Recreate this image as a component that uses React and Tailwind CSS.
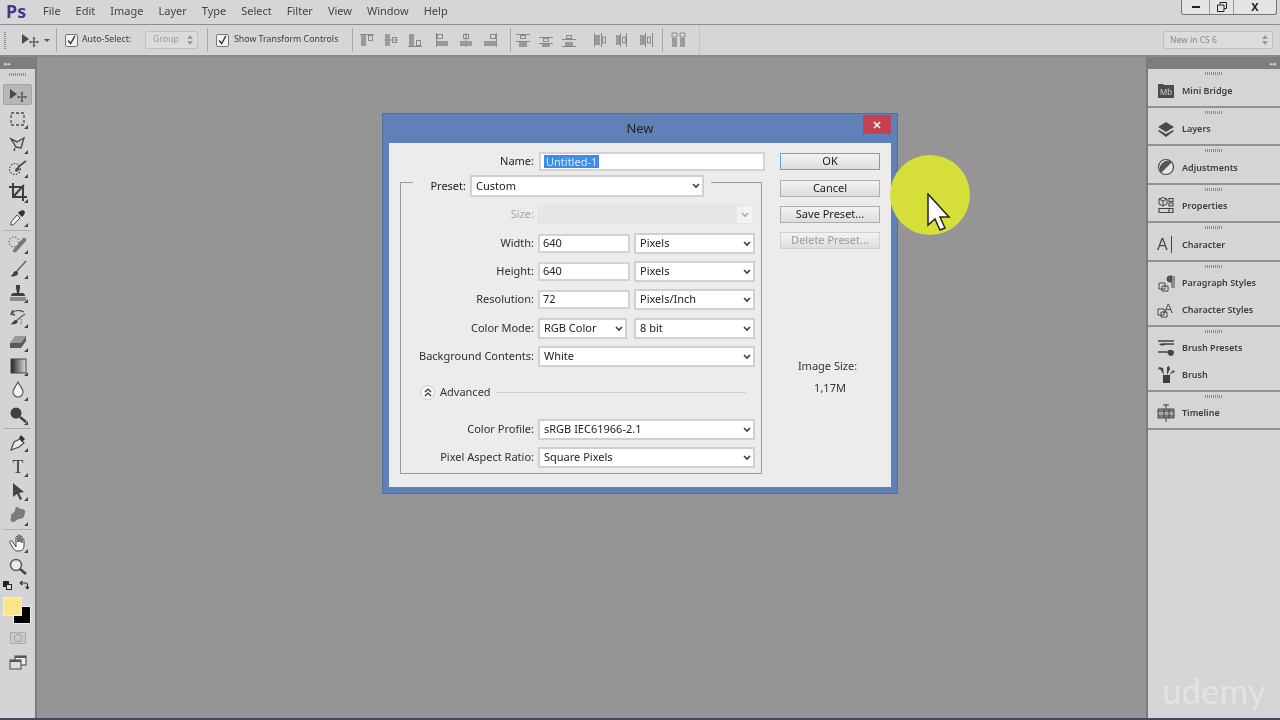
import React from "react";

const menus = ["File", "Edit", "Image", "Layer", "Type", "Select", "Filter", "View", "Window", "Help"];

const Grip = ({ className = "" }) => (
  <div className={`h-[3px] bg-[repeating-linear-gradient(90deg,#8c8c8c_0_1px,transparent_1px_2px)] ${className}`} />
);

const Chevron = ({ color = "#3c3c3c" }) => (
  <svg width="8" height="6" viewBox="0 0 8 6" className="shrink-0">
    <path d="M1 1l3 3 3-3" fill="none" stroke={color} strokeWidth="1.6" />
  </svg>
);

const UpDown = ({ color = "#999" }) => (
  <svg width="6" height="10" viewBox="0 0 6 10" className="shrink-0">
    <path d="M3 0l3 4H0zM3 10L0 6h6z" fill={color} />
  </svg>
);

const Check = () => (
  <div className="flex h-[13px] w-[13px] items-center justify-center rounded-[2px] border border-[#777] bg-[#f2f2f2]">
    <svg width="13" height="13" viewBox="0 0 13 13">
      <path d="M2.5 6.5l3 3.5 5-9" fill="none" stroke="#333" strokeWidth="1.6" />
    </svg>
  </div>
);

const Sep = ({ className = "" }) => <div className={`h-[24px] w-px bg-[#a8a8a8] ${className}`} />;

// options bar align icons
const AlignIcon = ({ d, r }) => (
  <svg width="16" height="16" viewBox="0 0 16 16">
    <path d={d} stroke="#8a8a8a" strokeWidth="1" fill="none" />
    <rect x={r[0]} y={r[1]} width={r[2]} height={r[3]} fill="#9a9a9a" />
    <rect x={r[4]} y={r[5]} width={r[6]} height={r[7]} fill="none" stroke="#8a8a8a" />
  </svg>
);

const alignGroups = [
  { d: "M1 2.5h14", r: [2, 3, 5, 11, 9.5, 3.5, 4, 5] },
  { d: "M1 8h14", r: [2, 2, 5, 12, 9.5, 5.5, 4, 5] },
  { d: "M1 14.5h14", r: [2, 2, 5, 12, 9.5, 8.5, 4, 5] },
  { d: "M2.5 1v14", r: [3, 9, 11, 5, 3.5, 2.5, 5, 4] },
  { d: "M8 1v14", r: [2, 9, 12, 5, 5.5, 2.5, 5, 4] },
  { d: "M14.5 1v14", r: [2, 9, 12, 5, 8.5, 2.5, 5, 4] },
];
const distributeGroups = [
  { d: "M1 2.5h14M1 9.5h14", r: [4, 10, 8, 5, 5.5, 3.5, 5, 3] },
  { d: "M1 5.5h14M1 11.5h14", r: [4, 12, 8, 3, 5.5, 6.5, 5, 3] },
  { d: "M1 7.5h14M1 14.5h14", r: [4, 10, 8, 4, 5.5, 3.5, 5, 3] },
  { d: "M2.5 1v14M9.5 1v14", r: [3, 3, 5, 10, 10.5, 5, 3, 6] },
  { d: "M5.5 1v14M11.5 1v14", r: [1, 3, 4, 10, 7.5, 5, 3, 6] },
  { d: "M7.5 1v14M14.5 1v14", r: [2, 3, 5, 10, 9.5, 5, 3, 6] },
];

const MoveIcon = ({ w = 18 }) => (
  <svg width={w} height="16" viewBox="0 0 18 16">
    <path d="M1 2v10l7-5z" fill="#4a4a4a" />
    <path d="M13 6v8M9 10h8" stroke="#4a4a4a" strokeWidth="1.2" />
    <path d="M13 4.500l1.500 2h-3zM13 15.500l-1.500-2h3zM8 10l2-1.500v3zM18 10l-2 1.500v-3z" fill="#4a4a4a" />
  </svg>
);

const G = "#4b4b4b";
const toolIcons = {
  marquee: <rect x="3" y="4" width="13" height="12" fill="none" stroke={G} strokeWidth="1.3" strokeDasharray="3 2" />,
  lasso: <path d="M3 5l6 3 7-4-3 10-5-1-3-5zM7 14l-1 3" fill="none" stroke={G} strokeWidth="1.4" />,
  quick: (
    <>
      <circle cx="7" cy="11" r="5.500" fill="none" stroke={G} strokeWidth="1.2" strokeDasharray="1.500 1.500" />
      <path d="M18 3l-8 6" stroke={G} strokeWidth="1.600" />
      <path d="M7 13c0-3 2-4 4-4 1 1 1 3-1 4-1 1-2 1-3 0z" fill={G} />
    </>
  ),
  crop: <path d="M5 1v14h14M1 5h14v14M16 3L5 15" fill="none" stroke="#3e3e3e" strokeWidth="2" />,
  dropper: (
    <>
      <path d="M9 8l3 3-7 7H3v-3z" fill="#f1f1f1" stroke={G} />
      <path d="M10 6l4 4 2-2 1-3-2-2-3 1z" fill="#333" />
    </>
  ),
  heal: (
    <>
      <circle cx="6" cy="8" r="5" fill="none" stroke={G} strokeDasharray="1.500 1.500" />
      <path d="M5 16L15 4c2-1 4 1 3 3L8 18c-2 1-4-1-3-2z" fill="#787878" />
    </>
  ),
  brush: (
    <>
      <path d="M18 2L9 12" stroke="#666" strokeWidth="1.600" />
      <path d="M2 17c3 0 3-5 6-5 2 0 2 2 2 3-1 2-5 3-8 2z" fill="#3f3f3f" />
    </>
  ),
  stamp: (
    <>
      <path d="M8 2h4v3l-1 5h3c2 0 3 1 3 3H3c0-2 1-3 3-3h3L8 5z" fill="#3f3f3f" />
      <rect x="2" y="14" width="16" height="4" fill="#8a8a8a" />
    </>
  ),
  history: (
    <>
      <path d="M4 6c3-3 8-3 12-1M5 3L3 7l4 1" fill="none" stroke={G} strokeWidth="1.300" />
      <path d="M17 7L9 13" stroke="#666" strokeWidth="1.500" />
      <path d="M2 17c3 0 3-4 6-4 2 0 2 2 1 3-1 1-4 2-7 1z" fill="#3f3f3f" />
      <path d="M13 12a5 5 0 01-1 6" fill="none" stroke={G} strokeDasharray="1.500 1.500" />
    </>
  ),
  eraser: (
    <>
      <path d="M7 4h11l-5 7H2z" fill="#9a9a9a" />
      <path d="M2 11h11v5H2zM13 11l5-7v5l-5 7z" fill="#5a5a5a" />
    </>
  ),
  gradient: (
    <>
      <defs>
        <linearGradient id="gradTool" x1="0" x2="1" y1="0" y2="0">
          <stop offset="0" stopColor="#222" />
          <stop offset="1" stopColor="#ddd" />
        </linearGradient>
      </defs>
      <rect x="3" y="3" width="15" height="14" fill="url(#gradTool)" stroke="#444" />
    </>
  ),
  drop: <path d="M10 2c2 4 5 7 5 10a5 5 0 01-10 0c0-3 3-6 5-10z" fill="#f4f4f4" stroke="#5a5a5a" strokeWidth="1.200" />,
  burn: (
    <>
      <circle cx="8" cy="8" r="5.500" fill="#3f3f3f" />
      <path d="M12 12l6 5" stroke="#3f3f3f" strokeWidth="2.400" />
    </>
  ),
  pen: (
    <>
      <path d="M12 7l4 4-5 4-8 3 3-8z" fill="#eee" stroke={G} strokeWidth="1.200" />
      <path d="M11 6l2-3 4 4-3 3z" fill="#333" />
    </>
  ),
  type: (
    <text x="10" y="16" textAnchor="middle" fontSize="18" fill="#3c3c3c" fontFamily="Liberation Serif, serif">
      T
    </text>
  ),
  path: <path d="M5 2l11 9-5 1 3 6-2 1-3-6-4 3z" fill="#444" />,
  shape: <path d="M9 2c2 0 2 2 4 2 3 0 5 1 4 4-1 2 0 3-2 5-2 1-4 0-6 2-2 2-5 3-6 1-1-2 0-3 0-5 0-3 4-3 4-6 0-2 1-3 2-3z" fill="#7c7c7c" />,
  hand: (
    <path d="M4 8l4 6V4.500c0-1.500 2-1.500 2 0V9 3c0-1.500 2-1.500 2 0v6-5c0-1.500 2-1.500 2 0v6-3c0-1.500 2-1.500 2 0v6c0 3-2 5-5 5H9c-2 0-3-2-4-3L2 10c-1-2 1-3 2-2z" fill="#fafafa" stroke="#4a4a4a" />
  ),
  zoom: (
    <>
      <circle cx="8" cy="8" r="5.500" fill="#e8e8e8" stroke="#555" strokeWidth="1.400" />
      <path d="M12 12l6 5" stroke="#444" strokeWidth="2.400" />
    </>
  ),
};

const toolGroups = [
  ["marquee", "lasso", "quick", "crop", "dropper"],
  ["heal", "brush", "stamp", "history", "eraser", "gradient", "drop", "burn"],
  ["pen", "type", "path", "shape"],
  ["hand", "zoom"],
];

const Tool = ({ name }) => (
  <div className="relative flex h-[24.4px] items-center justify-center">
    <svg width="20" height="20" viewBox="0 0 20 20">
      {toolIcons[name]}
    </svg>
    {name !== "zoom" && (
      <svg className="absolute right-[7px] bottom-[2px]" width="4" height="4" viewBox="0 0 4 4">
        <path d="M4 0v4H0z" fill="#444" />
      </svg>
    )}
  </div>
);

const LeftToolbar = () => (
  <aside className="flex w-[35px] shrink-0 flex-col bg-[#d4d4d4]">
    <div className="flex h-[12px] items-center bg-[#7e7e7e] pl-[4px] text-[7px] leading-none text-[#cfcfcf]">▸▸</div>
    <Grip className="mx-auto mt-[4px] w-[18px]" />
    <div className="mx-[3px] mt-[8px] mb-[2px] flex h-[21px] items-center justify-center rounded-[2px] border border-[#a3a3a3] bg-[#b6b6b6]">
      <MoveIcon w={20} />
    </div>
    {toolGroups.map((g, i) => (
      <div key={i}>
        {i > 0 && <div className="mx-[4px] my-[1px] border-t border-[#b0b0b0]" />}
        {g.map((name) => (
          <Tool key={name} name={name} />
        ))}
      </div>
    ))}
    <div className="flex h-[12px] items-center gap-[7px] pl-[3px]">
      <div className="relative h-[9px] w-[9px]">
        <div className="absolute top-0 left-0 h-[6px] w-[6px] bg-[#222]" />
        <div className="absolute right-0 bottom-0 h-[6px] w-[6px] border border-[#222] bg-[#ddd]" />
      </div>
      <svg width="10" height="10" viewBox="0 0 10 10">
        <path d="M1 3h5.500a2 2 0 012 2v4M1 3l2.500-2M1 3l2.500 2M8.500 9L6.500 6.500M8.500 9l2-2.500" fill="none" stroke="#333" strokeWidth="1.200" />
      </svg>
    </div>
    <div className="relative mt-[6px] h-[28px]">
      <div className="absolute top-[9px] left-[13px] h-[18px] w-[18px] border border-[#eee] bg-black" />
      <div className="absolute top-0 left-[3px] h-[19px] w-[19px] border border-[#eee] bg-[#fbe58c]" />
    </div>
    <div className="mx-auto mt-[7px] flex h-[12px] w-[16px] items-center justify-center border border-[#aaa] bg-[#cbcbcb]">
      <div className="h-[8px] w-[8px] rounded-full border border-dotted border-[#777]" />
    </div>
    <div className="mt-[10px] flex justify-center">
      <svg width="20" height="18" viewBox="0 0 20 18">
        <rect x="7" y="2" width="11" height="9" fill="#eee" stroke="#444" />
        <path d="M7 2h11v2H7z" fill="#555" />
        <rect x="2" y="6" width="11" height="9" fill="#ddd" stroke="#444" />
        <path d="M2 6h11v2H2z" fill="#555" />
      </svg>
    </div>
  </aside>
);

const PanelIcon = {
  mb: (
    <>
      <path d="M1 3h5l1 1h10v13H1z" fill="#4c4c4c" />
      <text x="9" y="14" textAnchor="middle" fontSize="8.500" fill="#ccc" fontFamily="Liberation Sans, sans-serif">
        Mb
      </text>
    </>
  ),
  layers: <path d="M9 2l8 5-8 5-8-5zM2 10l7 4 7-4 1 1-8 6-8-6z" fill="#4a4a4a" />,
  adj: (
    <>
      <circle cx="9" cy="9" r="7.500" fill="#e6e6e6" stroke="#4c4c4c" strokeWidth="1.200" />
      <path d="M15 4A8 8 0 004 15z" fill="#555" />
    </>
  ),
  props: (
    <>
      <path d="M2 2l4-1.500 4 1.500v5l-4 2-4-2zM2 2l4 2 4-2M6 4v5" fill="none" stroke="#444" />
      <path d="M12 1.500h4v3h-4zM12 6h4v3h-4zM2 11.500h14v4H2zM12 12v3" fill="none" stroke="#444" strokeWidth="1.100" />
    </>
  ),
  char: (
    <>
      <text x="0" y="15" fontSize="16" fill="#4a4a4a" fontFamily="Liberation Sans, sans-serif">
        A
      </text>
      <path d="M14.500 1v17" stroke="#444" />
    </>
  ),
  para: (
    <>
      <path d="M2 9h6v6H2zM5 12h6v5H5z" fill="#ddd" stroke="#444" />
      <path d="M15 2h-2a3 3 0 000 6h2M15 2v12M17 2v12" fill="#555" stroke="#444" />
    </>
  ),
  cstyle: (
    <>
      <path d="M1 9h6v6H1zM4 12h6v5H4z" fill="#ddd" stroke="#444" />
      <text x="7" y="13" fontSize="13" fill="#4a4a4a" fontFamily="Liberation Sans, sans-serif">
        A
      </text>
    </>
  ),
  presets: (
    <>
      <path d="M1 2h16M7 5h10M1 13h9" stroke="#444" strokeWidth="1.300" />
      <path d="M2 5c3-1 5-1 7 0-2 2-5 2-7 0z" fill="#444" />
      <path d="M10 13c1-3 6-3 7 0 0 3-2 4-3 4s-3-1-4-4z" fill="#444" />
    </>
  ),
  brush: (
    <>
      <path d="M6 10h7v8H6z" fill="#3d3d3d" />
      <path d="M7 10L3 4l-2 1 1-3 4 1zM10 10V2l2-1 1 3zM12 10l4-5 2 2-3 1z" fill="#444" />
    </>
  ),
  timeline: (
    <>
      <path d="M9 0v18M6 1h6" stroke="#444" />
      <path d="M1 5h16v9H1z" fill="#aaa" stroke="#444" />
      <path d="M1 7h16M1 12h16M7 5v9M12 5v9" stroke="#444" />
    </>
  ),
};

const panelSections = [
  [["mb", "Mini Bridge"]],
  [["layers", "Layers"]],
  [["adj", "Adjustments"]],
  [["props", "Properties"]],
  [["char", "Character"]],
  [["para", "Paragraph Styles"], ["cstyle", "Character Styles"]],
  [["presets", "Brush Presets"], ["brush", "Brush"]],
  [["timeline", "Timeline"]],
];

const RightPanel = () => (
  <aside className="flex w-[132px] shrink-0 flex-col bg-[#d5d5d5]">
    <div className="flex h-[12px] items-center justify-end bg-[#7e7e7e] pr-[4px] text-[7px] leading-none text-[#cfcfcf]">◂◂</div>
    {panelSections.map((section, i) => (
      <section key={i} className="border-b-2 border-[#929292] pt-[3px] pb-[2px]">
        <Grip className="mx-auto mb-[2px] w-[18px]" />
        {section.map(([icon, label]) => (
          <div key={label} className="flex h-[26.500px] items-center gap-[7px] pl-[9px]">
            <svg width="18" height="18" viewBox="0 0 18 18" className="overflow-visible">
              {PanelIcon[icon]}
            </svg>
            <span className="text-[9px] font-semibold whitespace-nowrap text-[#3c3c3c]">{label}</span>
          </div>
        ))}
      </section>
    ))}
  </aside>
);

const Input = ({ className = "", children }) => (
  <div className={`flex h-[19px] items-center border-2 border-[#d3d3d3] bg-white pl-[3px] text-[11px] text-[#222] ${className}`}>
    {children}
  </div>
);

const Select = ({ className = "", children }) => (
  <div className={`flex h-[21px] items-center justify-between border-2 border-[#d0d0d0] bg-white pr-[2px] pl-[4px] text-[11px] text-[#222] ${className}`}>
    <span>{children}</span>
    <Chevron />
  </div>
);

const Row = ({ label, children, className = "" }) => (
  <div className={`flex items-center ${className}`}>
    <span className="w-[133px] text-right text-[11px] whitespace-nowrap text-[#2e2e2e]">{label}</span>
    <div className="ml-[4px] flex items-center gap-[4px]">{children}</div>
  </div>
);

const Button = ({ children, variant, className = "" }) => {
  const tone =
    variant === "ok"
      ? "border-[#5aa5dc] text-[#222]"
      : variant === "off"
      ? "border-[#d0d0d0] text-[#9a9a9a]"
      : "border-[#aeaeae] text-[#222]";
  return (
    <div className={`flex h-[17px] w-[100px] items-center justify-center border bg-gradient-to-b from-[#f2f2f2] to-[#dedede] text-[11px] ${tone} ${className}`}>
      {children}
    </div>
  );
};

const Dialog = () => (
  <div className="absolute top-[113px] left-[382px] flex h-[381px] w-[516px] flex-col border border-[#56709b] bg-[#5f81b7]">
    <div className="relative flex h-[29px] shrink-0 items-center justify-center text-[13px] text-[#222]">
      New
      <div className="absolute top-[1px] right-[6px] flex h-[19px] w-[28px] items-center justify-center bg-[#c7404f]">
        <svg width="8" height="8" viewBox="0 0 8 8">
          <path d="M1 1l6 6M7 1L1 7" stroke="#fff" strokeWidth="1.500" />
        </svg>
      </div>
    </div>
    <div className="mx-[6px] mb-[6px] flex flex-1 bg-[#ececec]">
      <div className="w-[391px] shrink-0 pt-[9px]">
        <div className="flex items-center">
          <span className="w-[145px] text-right text-[11px] text-[#222]">Name:</span>
          <Input className="ml-[5px] w-[226px] pl-[1px]">
            <span className="bg-[#3b8fe8] px-[2px] leading-[13px] text-[#d8e8f8]">Untitled-1</span>
          </Input>
        </div>
        <div className="mt-[11px] ml-[11px] h-[292px] w-[362px] border border-[#9a9a9a]">
          <div className="mt-[-8px] ml-[12px] flex w-[298px] items-center justify-end bg-[#ececec] pr-[7px]">
            <span className="mr-[4px] text-[11px] text-[#222]">Preset:</span>
            <Select className="h-[22px] w-[234px]">Custom</Select>
          </div>
          <Row label="Size:" className="mt-[8px] [&>span]:text-[#a5a5a5]">
            <div className="flex h-[19px] w-[216px] items-center justify-end border border-[#e2e2e2] bg-[#e6e6e6]">
              <div className="flex h-[17px] w-[16px] items-center justify-center bg-[#f2f2f2]">
                <Chevron color="#aaa" />
              </div>
            </div>
          </Row>
          <Row label="Width:" className="mt-[9px]">
            <Input className="w-[92px]">640</Input>
            <Select className="w-[121px]">Pixels</Select>
          </Row>
          <Row label="Height:" className="mt-[7px]">
            <Input className="w-[92px]">640</Input>
            <Select className="w-[121px]">Pixels</Select>
          </Row>
          <Row label="Resolution:" className="mt-[7px]">
            <Input className="w-[92px]">72</Input>
            <Select className="w-[121px]">Pixels/Inch</Select>
          </Row>
          <Row label="Color Mode:" className="mt-[8px]">
            <Select className="mr-[3px] w-[89px]">RGB Color</Select>
            <Select className="w-[121px]">8 bit</Select>
          </Row>
          <Row label="Background Contents:" className="mt-[7px]">
            <Select className="w-[217px]">White</Select>
          </Row>
          <div className="mt-[17px] flex h-[16px] items-center pl-[19px]">
            <div className="flex h-[15px] w-[15px] items-center justify-center rounded-full border border-[#c8c8c8] bg-[#f6f6f6]">
              <svg width="8" height="9" viewBox="0 0 8 9">
                <path d="M1 4l3-3 3 3M1 8l3-3 3 3" fill="none" stroke="#333" strokeWidth="1.200" />
              </svg>
            </div>
            <span className="ml-[5px] text-[11px] text-[#333]">Advanced</span>
            <div className="ml-[5px] h-px w-[250px] bg-[#cfcfcf]" />
          </div>
          <Row label="Color Profile:" className="mt-[19px]">
            <Select className="w-[217px]">sRGB IEC61966-2.1</Select>
          </Row>
          <Row label="Pixel Aspect Ratio:" className="mt-[7px]">
            <Select className="w-[217px]">Square Pixels</Select>
          </Row>
        </div>
      </div>
      <div className="flex flex-col pt-[10px]">
        <div className="flex flex-col gap-[9px]">
          <Button variant="ok" className="mb-[1px]">OK</Button>
          <Button>Cancel</Button>
          <Button>Save Preset...</Button>
          <Button variant="off">Delete Preset...</Button>
        </div>
        <div className="mt-[109px] pr-[5px] text-center text-[11px] leading-[16px] text-[#333]">Image Size:</div>
        <div className="mt-[6px] text-center text-[11px] leading-[16px] text-[#333]">1,17M</div>
      </div>
    </div>
  </div>
);

export default function App() {
  return (
    <div
      className="relative flex h-[720px] w-[1280px] flex-col overflow-hidden bg-[#d6d6d6] text-[#333] blur-[0.3px]"
      style={{ fontFamily: '"Noto Sans", "DejaVu Sans", sans-serif' }}
    >
      {/* menu bar */}
      <header className="relative flex h-[25px] shrink-0 items-center border-b border-[#8f8f8f] pb-[2px] pl-[6px]">
        <span className="w-[37px] text-[18px] leading-none font-bold text-[#3c3a8e]">Ps</span>
        <nav className="flex gap-[15px] text-[11px] text-[#444]">
          {menus.map((m) => (
            <span key={m}>{m}</span>
          ))}
        </nav>
        <div className="absolute top-0 right-[3px] flex h-[15px] w-[96px] items-stretch rounded-b-[3px] border border-t-0 border-[#777] bg-[#e4e4e4]">
          <div className="flex w-[28px] items-center justify-center border-r border-[#999]">
            <div className="h-[2px] w-[8px] bg-[#222]" />
          </div>
          <div className="flex w-[24px] items-center justify-center border-r border-[#999]">
            <svg width="10" height="10" viewBox="0 0 10 10">
              <path d="M3 2.500V.5h6.500v6H7M.5 3h6.500v6.500H.5z" fill="none" stroke="#222" />
            </svg>
          </div>
          <div className="flex flex-1 items-center justify-center text-[11px] font-bold text-[#222]">X</div>
        </div>
      </header>

      {/* options bar */}
      <div className="flex h-[32px] shrink-0 items-center border-b-2 border-[#8a8a8a] pl-[4px] text-[8.800px] whitespace-nowrap text-[#3c3c3c]">
        <div className="h-[18px] w-[2px] bg-[repeating-linear-gradient(0deg,#8c8c8c_0_1px,transparent_1px_2px)]" />
        <div className="ml-[15px]">
          <MoveIcon />
        </div>
        <div className="mt-[1px] ml-[5px] h-0 w-0 border-x-[3px] border-t-[3px] border-x-transparent border-t-[#555]" />
        <Sep className="ml-[6px]" />
        <div className="ml-[8px]">
          <Check />
        </div>
        <span className="ml-[4px] w-[50px]">Auto-Select:</span>
        <div className="ml-[13px] flex h-[18px] w-[53px] items-center justify-between rounded-[2px] border border-[#c0c0c0] bg-[#dcdcdc] pr-[4px] pl-[7px] text-[#999]">
          Group
          <UpDown />
        </div>
        <Sep className="ml-[9px]" />
        <div className="ml-[8px]">
          <Check />
        </div>
        <span className="ml-[5px] w-[105px]">Show Transform Controls</span>
        <Sep className="ml-[13px]" />
        <div className="ml-[6px] flex items-center gap-[8px]">
          {alignGroups.map((a, i) => (
            <div key={i} className={i === 3 ? "ml-[3px]" : ""}>
              <AlignIcon {...a} />
            </div>
          ))}
        </div>
        <Sep className="ml-[12px]" />
        <div className="ml-[4px] flex items-center gap-[7px]">
          {distributeGroups.map((a, i) => (
            <div key={i} className={i === 3 ? "ml-[8px]" : ""}>
              <AlignIcon {...a} />
            </div>
          ))}
        </div>
        <Sep className="ml-[8px]" />
        <div className="ml-[8px]">
          <svg width="16" height="16" viewBox="0 0 16 16">
            <path d="M1 1h5v4H1zM9 1h5v4H9z" fill="none" stroke="#8a8a8a" />
            <path d="M1 6h5v9H1zM9 6h5v9H9z" fill="#9a9a9a" />
          </svg>
        </div>
        <div className="ml-[12px] h-[30px] w-px bg-[#c4c4c4]" />
        <div className="mr-[7px] ml-auto flex h-[18px] w-[110px] items-center justify-between rounded-[2px] border border-[#c0c0c0] bg-[#dcdcdc] pr-[4px] pl-[6px] text-[8.500px] text-[#888]">
          New in CS 6
          <UpDown />
        </div>
      </div>

      {/* work area */}
      <div className="flex min-h-0 flex-1">
        <LeftToolbar />
        <main className="flex-1 border-x-2 border-[#7b7b7b] bg-[#959595]" />
        <RightPanel />
      </div>
      <div className="h-[2px] shrink-0 bg-[#3f4a5c]" />

      <Dialog />

      {/* cursor highlight */}
      <div className="absolute top-[155px] left-[890px] h-[80px] w-[80px] rounded-full bg-[#d6df3a]" />
      <svg className="absolute top-[193px] left-[926px]" width="26" height="40" viewBox="0 0 26 40">
        <path d="M2 1v31l7-6 5 11 5-2-5-11h9z" fill="#fff" stroke="#222" strokeWidth="1.500" />
      </svg>

      <span className="absolute top-[666px] left-[1162px] text-[35px] leading-[48px] font-normal text-[#e3e3e3]" style={{ fontFamily: "Lato, sans-serif" }}>
        udemy
      </span>
    </div>
  );
}
